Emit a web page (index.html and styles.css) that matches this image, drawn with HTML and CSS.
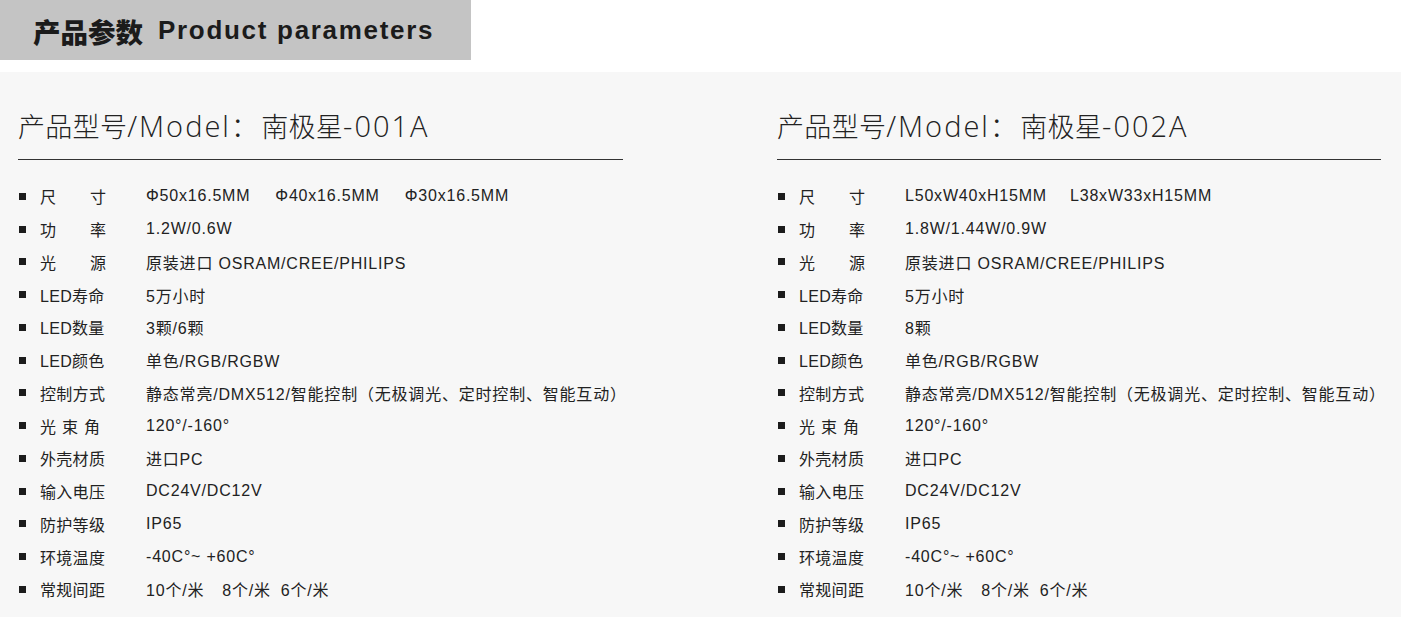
FILE: index.html
```html
<!DOCTYPE html>
<html lang="zh">
<head>
<meta charset="utf-8">
<title>产品参数 Product parameters</title>
<link rel="stylesheet" href="styles.css">
</head>
<body>
<header class="top">
  <div class="title-bar"><span class="cn">产品参数</span><span class="en">Product parameters</span></div>
</header>
<main class="cols">
  <section class="col">
    <h2 class="model">产品型号<span class="lat">/Model</span><span class="colon">：</span>南极星<span class="lat">-001A</span></h2>
    <ul class="specs">
      <li><span class="lbl j">尺寸</span><span class="val">Φ50x16.5MM<span class="gap"></span>Φ40x16.5MM<span class="gap"></span>Φ30x16.5MM</span></li>
      <li><span class="lbl j">功率</span><span class="val">1.2W/0.6W</span></li>
      <li><span class="lbl j">光源</span><span class="val">原装进口 OSRAM/CREE/PHILIPS</span></li>
      <li><span class="lbl">LED寿命</span><span class="val">5万小时</span></li>
      <li><span class="lbl">LED数量</span><span class="val">3颗/6颗</span></li>
      <li><span class="lbl">LED颜色</span><span class="val">单色/RGB/RGBW</span></li>
      <li><span class="lbl">控制方式</span><span class="val">静态常亮/DMX512/智能控制（无极调光、定时控制、智能互动）</span></li>
      <li><span class="lbl sp">光束角</span><span class="val">120°/-160°</span></li>
      <li><span class="lbl">外壳材质</span><span class="val">进口PC</span></li>
      <li><span class="lbl">输入电压</span><span class="val">DC24V/DC12V</span></li>
      <li><span class="lbl">防护等级</span><span class="val">IP65</span></li>
      <li><span class="lbl">环境温度</span><span class="val">-40C°~ +60C°</span></li>
      <li><span class="lbl">常规间距</span><span class="val">10个/米<span class="gap s"></span>8个/米<span class="gap xs"></span>6个/米</span></li>
    </ul>
  </section>
  <section class="col">
    <h2 class="model">产品型号<span class="lat">/Model</span><span class="colon">：</span>南极星<span class="lat">-002A</span></h2>
    <ul class="specs">
      <li><span class="lbl j">尺寸</span><span class="val">L50xW40xH15MM<span class="gap m"></span>L38xW33xH15MM</span></li>
      <li><span class="lbl j">功率</span><span class="val">1.8W/1.44W/0.9W</span></li>
      <li><span class="lbl j">光源</span><span class="val">原装进口 OSRAM/CREE/PHILIPS</span></li>
      <li><span class="lbl">LED寿命</span><span class="val">5万小时</span></li>
      <li><span class="lbl">LED数量</span><span class="val">8颗</span></li>
      <li><span class="lbl">LED颜色</span><span class="val">单色/RGB/RGBW</span></li>
      <li><span class="lbl">控制方式</span><span class="val">静态常亮/DMX512/智能控制（无极调光、定时控制、智能互动）</span></li>
      <li><span class="lbl sp">光束角</span><span class="val">120°/-160°</span></li>
      <li><span class="lbl">外壳材质</span><span class="val">进口PC</span></li>
      <li><span class="lbl">输入电压</span><span class="val">DC24V/DC12V</span></li>
      <li><span class="lbl">防护等级</span><span class="val">IP65</span></li>
      <li><span class="lbl">环境温度</span><span class="val">-40C°~ +60C°</span></li>
      <li><span class="lbl">常规间距</span><span class="val">10个/米<span class="gap s"></span>8个/米<span class="gap xs"></span>6个/米</span></li>
    </ul>
  </section>
</main>
</body>
</html>
```
FILE: styles.css
```css
* { box-sizing: border-box; }
html, body { margin: 0; padding: 0; }
body {
  background: #f7f7f7;
  font-family: "Liberation Sans", Arial, "Noto Sans CJK SC", sans-serif;
  color: #222;
  width: 1401px;
  height: 617px;
  overflow: hidden;
}
.top {
  background: #ffffff;
  height: 72px;
}
.title-bar {
  width: 471px;
  height: 60px;
  background: #c4c4c4;
  display: flex;
  align-items: center;
  padding-left: 33px;
  padding-top: 1px;
  color: #1b1b1b;
  font-weight: bold;
}
.title-bar .cn {
  font-family: "Noto Sans CJK SC", sans-serif;
  font-size: 27.5px;
  font-weight: 900;
}
.title-bar .en {
  font-size: 26px;
  margin-left: 15px;
  letter-spacing: 1.7px;
}
.cols {
  display: grid;
  grid-template-columns: 605px 604px;
  column-gap: 154px;
  padding-left: 18px;
}
.model {
  margin: 0;
  padding-top: 36px;
  height: 88px;
  border-bottom: 1px solid #333;
  font-family: "Open Sans", "Noto Sans CJK SC", sans-serif;
  font-weight: 300;
  font-size: 27px;
  line-height: 36px;
  color: #222;
  letter-spacing: 0.3px;
}
.model .lat { font-size: 29px; letter-spacing: 2px; }
.model .colon { margin-right: 3px; }
.specs {
  list-style: none;
  margin: 0;
  padding: 20px 0 0 0;
  display: flex;
  flex-direction: column;
}
.specs li {
  display: flex;
  align-items: center;
  height: 32.75px;
  font-size: 16px;
  letter-spacing: 0.8px;
  color: #222;
}
.specs li::before {
  content: "";
  width: 7px;
  height: 7px;
  background: #1c1c1c;
  margin-left: 1px;
  margin-right: 14px;
  flex: none;
}
.lbl {
  width: 106px;
  flex: none;
  letter-spacing: 0.3px;
}
.lbl.j {
  display: inline-block;
  width: 66px;
  margin-right: 40px;
  text-align: justify;
  text-align-last: justify;
  letter-spacing: 0;
}
.lbl.sp { letter-spacing: 6px; }
.val { white-space: nowrap; }
.gap { display: inline-block; width: 25px; }
.gap.m { width: 23px; }
.gap.s { width: 18px; }
.gap.xs { width: 10px; }
```
